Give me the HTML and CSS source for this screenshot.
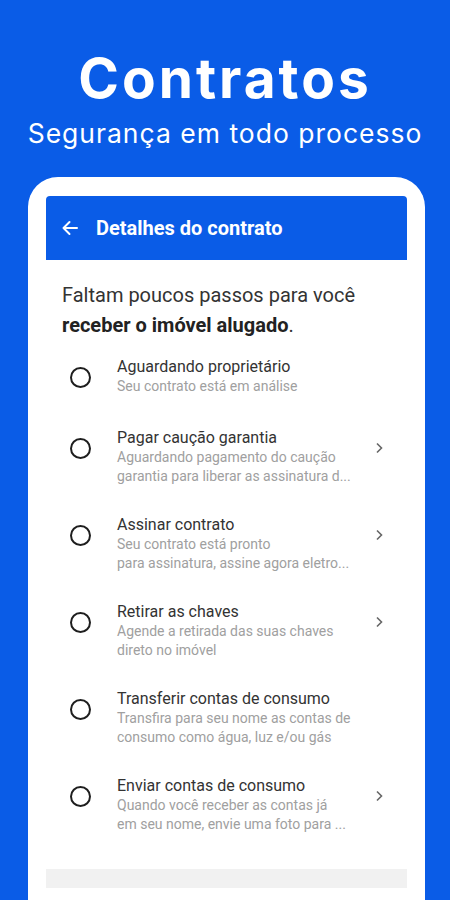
FILE: index.html
```html
<!DOCTYPE html>
<html lang="pt-BR">
<head>
<meta charset="utf-8">
<title>Contratos</title>
<link rel="stylesheet" href="styles.css">
</head>
<body>
<div class="page">
  <header class="hero">
    <h1 class="hero-title">Contratos</h1>
    <p class="hero-sub">Segurança em todo processo</p>
  </header>
  <div class="phone">
    <div class="appbar">
      <svg class="back" width="18" height="16" viewBox="0 0 18 16"><path d="M16 8H2.5M8.5 2L2.5 8l6 6" fill="none" stroke="#fff" stroke-width="2" stroke-linecap="round" stroke-linejoin="round"/></svg>
      <span class="appbar-title">Detalhes do contrato</span>
    </div>
    <p class="intro">Faltam poucos passos para você <b>receber o imóvel alugado</b>.</p>
    <ul class="steps">
      <li class="step">
        <span class="dot"></span>
        <div class="step-text">
          <div class="step-title">Aguardando proprietário</div>
          <div class="step-sub">Seu contrato está em análise</div>
        </div>
        <span class="chev none"></span>
      </li>
      <li class="step">
        <span class="dot"></span>
        <div class="step-text">
          <div class="step-title">Pagar caução garantia</div>
          <div class="step-sub">Aguardando pagamento do caução<br>garantia para liberar as assinatura d...</div>
        </div>
        <svg class="chev" width="8" height="12" viewBox="0 0 8 12"><path d="M2 1.5L6.5 6 2 10.5" fill="none" stroke="#666" stroke-width="1.6"/></svg>
      </li>
      <li class="step">
        <span class="dot"></span>
        <div class="step-text">
          <div class="step-title">Assinar contrato</div>
          <div class="step-sub">Seu contrato está pronto<br>para assinatura, assine agora eletro...</div>
        </div>
        <svg class="chev" width="8" height="12" viewBox="0 0 8 12"><path d="M2 1.5L6.5 6 2 10.5" fill="none" stroke="#666" stroke-width="1.6"/></svg>
      </li>
      <li class="step">
        <span class="dot"></span>
        <div class="step-text">
          <div class="step-title">Retirar as chaves</div>
          <div class="step-sub">Agende a retirada das suas chaves<br>direto no imóvel</div>
        </div>
        <svg class="chev" width="8" height="12" viewBox="0 0 8 12"><path d="M2 1.5L6.5 6 2 10.5" fill="none" stroke="#666" stroke-width="1.6"/></svg>
      </li>
      <li class="step">
        <span class="dot"></span>
        <div class="step-text">
          <div class="step-title">Transferir contas de consumo</div>
          <div class="step-sub">Transfira para seu nome as contas de<br>consumo como água, luz e/ou gás</div>
        </div>
        <span class="chev none"></span>
      </li>
      <li class="step">
        <span class="dot"></span>
        <div class="step-text">
          <div class="step-title">Enviar contas de consumo</div>
          <div class="step-sub">Quando você receber as contas já<br>em seu nome, envie uma foto para ...</div>
        </div>
        <svg class="chev" width="8" height="12" viewBox="0 0 8 12"><path d="M2 1.5L6.5 6 2 10.5" fill="none" stroke="#666" stroke-width="1.6"/></svg>
      </li>
    </ul>
    <div class="footer-bar"></div>
  </div>
</div>
</body>
</html>
```

FILE: styles.css
```css
* { box-sizing: border-box; }
html, body {
  margin: 0;
  padding: 0;
  background: #0a5ce7;
  height: 900px;
  overflow: hidden;
}
.page {
  height: 900px;
  display: flex;
  flex-direction: column;
  font-family: Roboto, "Noto Sans", sans-serif;
}
.hero {
  text-align: center;
  color: #fff;
  padding-top: 45px;
}
.hero-title {
  margin: 0;
  font-family: Inter, "Open Sans", sans-serif;
  font-weight: 700;
  font-size: 55px;
  line-height: 66px;
  letter-spacing: 3px;
}
.hero-sub {
  margin: 5px 0 0;
  font-family: Inter, "Open Sans", sans-serif;
  font-weight: 400;
  font-size: 26.5px;
  line-height: 34px;
  letter-spacing: 1px;
}
.phone {
  flex: 1;
  margin: 27px 25px 0 28px;
  background: #fff;
  border-radius: 30px 30px 0 0;
  padding: 19px 18px 0;
}
.appbar {
  height: 64px;
  background: #0a5ce7;
  border-radius: 4px 4px 0 0;
  display: flex;
  align-items: center;
  padding-left: 15px;
  color: #fff;
}
.back { margin-right: 17px; }
.appbar-title {
  font-weight: 700;
  font-size: 20px;
}
.intro {
  margin: 20px 0 0;
  padding: 0 16px;
  font-size: 20px;
  line-height: 30px;
  color: #333;
}
.intro b { color: #222; font-weight: 700; }
.steps {
  list-style: none;
  margin: 3px 0 0;
  padding: 0;
}
.step {
  display: flex;
  align-items: flex-start;
  padding: 14px 0 15px;
  min-height: 71px;
}
.dot {
  width: 21px;
  height: 21px;
  border: 2px solid #1e1e1e;
  border-radius: 50%;
  margin: 10px 26px 0 24px;
  flex: none;
}
.step-text { flex: 1; }
.step-title {
  font-size: 16px;
  line-height: 20px;
  color: #333;
}
.step-sub {
  font-size: 14px;
  line-height: 19px;
  color: #a0a0a0;
}
.chev {
  flex: none;
  margin: 14px 24px 0 0;
}
.chev.none { width: 8px; height: 12px; }
.footer-bar {
  margin-top: 20px;
  height: 19px;
  background: #f1f1f1;
}
```
